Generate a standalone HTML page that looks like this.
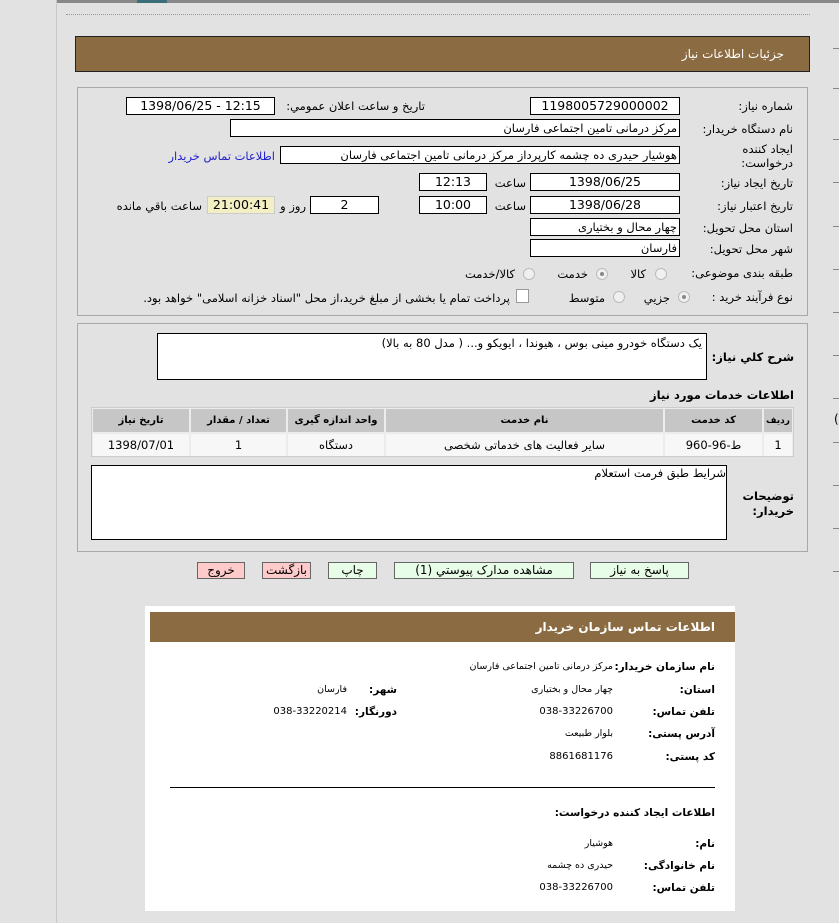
<!DOCTYPE html>
<html><head><meta charset="utf-8"><style>
*{margin:0;padding:0;box-sizing:border-box}
body{width:839px;height:923px;background:#e2e2e2;font-family:"DejaVu Sans","Noto Sans CJK SC",sans-serif;font-size:11.5px;color:#000;position:relative;overflow:hidden}
.a{position:absolute;white-space:nowrap}
.r{position:absolute;white-space:nowrap;direction:rtl;text-align:right}
.in{position:absolute;background:#fff;border:1px solid #000;height:18px;line-height:16px;text-align:center;font-size:12.5px}
.inr{position:absolute;background:#fff;border:1px solid #000;height:18px;line-height:16px;direction:rtl;text-align:right;padding-right:2px;font-size:11.5px;overflow:hidden}
.rad{position:absolute;width:12px;height:12px;border-radius:50%;border:1px solid #bbb;background:#f0f0f0}
.rad.on::after{content:"";position:absolute;left:3px;top:3px;width:4px;height:4px;border-radius:50%;background:#888}
.btn{position:absolute;height:17px;border:1px solid #666;line-height:15px;text-align:center;font-size:12px}
.t{position:absolute;left:833px;width:6px;height:1px;background:#888}
table{border-collapse:collapse}
.b{font-weight:bold}
.cl{font-size:10.5px}
</style></head><body>
<div class="a" style="left:56px;top:0;width:1px;height:923px;background:#c8c8c8"></div>
<div class="a" style="left:57px;top:0;width:782px;height:3px;background:#888"></div>
<div class="a" style="left:137px;top:0;width:30px;height:3px;background:#3a6f7a"></div>
<div class="a" style="left:66px;top:14px;width:744px;border-top:1px dotted #999"></div>
<div class="t" style="top:48px"></div><div class="t" style="top:88px"></div><div class="t" style="top:139px"></div><div class="t" style="top:182px"></div><div class="t" style="top:226px"></div><div class="t" style="top:269px"></div><div class="t" style="top:312px"></div><div class="t" style="top:355px"></div><div class="t" style="top:398px"></div><div class="t" style="top:442px"></div><div class="t" style="top:485px"></div><div class="t" style="top:528px"></div><div class="t" style="top:571px"></div>
<div class="a" style="left:834px;top:412px;font-size:12px">(</div>

<div class="a" style="left:75px;top:36px;width:735px;height:36px;background:#8b6c42;border:1px solid #222"></div>
<div class="r" style="right:55px;top:47px;color:#fff;font-size:12px">جزئیات اطلاعات نیاز</div>

<div class="a" style="left:77px;top:87px;width:731px;height:229px;border:1px solid #a8a8a8"></div>
<div class="r" style="right:46px;top:99px">شماره نیاز:</div>
<div class="in" style="left:530px;top:97px;width:150px">1198005729000002</div>
<div class="r" style="right:414px;top:99px">تاریخ و ساعت اعلان عمومي:</div>
<div class="in" style="left:126px;top:97px;width:149px">1398/06/25 - 12:15</div>
<div class="r" style="right:46px;top:122px">نام دستگاه خریدار:</div>
<div class="inr" style="left:230px;top:119px;width:450px">مرکز درمانی تامین اجتماعی فارسان</div>
<div class="r" style="right:46px;top:142px;line-height:14px">ایجاد کننده<br>درخواست:</div>
<div class="inr" style="left:280px;top:146px;width:400px">هوشیار حیدری ده چشمه کارپرداز مرکز درمانی تامین اجتماعی فارسان</div>
<div class="r" style="right:564px;top:149px;color:#2222cc">اطلاعات تماس خریدار</div>
<div class="r" style="right:46px;top:176px">تاریخ ایجاد نیاز:</div>
<div class="in" style="left:530px;top:173px;width:150px">1398/06/25</div>
<div class="r" style="right:313px;top:176px">ساعت</div>
<div class="in" style="left:419px;top:173px;width:68px">12:13</div>
<div class="r" style="right:46px;top:199px">تاریخ اعتبار نیاز:</div>
<div class="in" style="left:530px;top:196px;width:150px">1398/06/28</div>
<div class="r" style="right:313px;top:199px">ساعت</div>
<div class="in" style="left:419px;top:196px;width:68px">10:00</div>
<div class="in" style="left:310px;top:196px;width:69px">2</div>
<div class="r" style="right:533px;top:199px">روز و</div>
<div class="in" style="left:207px;top:196px;width:68px;background:#f3efc4;border-color:#ccc">21:00:41</div>
<div class="r" style="right:637px;top:199px">ساعت باقي مانده</div>
<div class="r" style="right:46px;top:221px">استان محل تحویل:</div>
<div class="inr" style="left:530px;top:218px;width:150px">چهار محال و بختیاری</div>
<div class="r" style="right:46px;top:242px">شهر محل تحویل:</div>
<div class="inr" style="left:530px;top:239px;width:150px">فارسان</div>
<div class="r" style="right:46px;top:266px">طبقه بندی موضوعی:</div>
<div class="rad" style="left:655px;top:268px"></div><div class="r" style="right:193px;top:267px">کالا</div>
<div class="rad on" style="left:596px;top:268px"></div><div class="r" style="right:251px;top:267px">خدمت</div>
<div class="rad" style="left:523px;top:268px"></div><div class="r" style="right:324px;top:267px">کالا/خدمت</div>
<div class="r" style="right:46px;top:290px">نوع فرآیند خرید :</div>
<div class="rad on" style="left:678px;top:291px"></div><div class="r" style="right:169px;top:291px">جزیي</div>
<div class="rad" style="left:613px;top:291px"></div><div class="r" style="right:234px;top:291px">متوسط</div>
<div class="a" style="left:516px;top:289px;width:13px;height:14px;border:1px solid #999;background:#fff"></div>
<div class="r" style="right:329px;top:291px">پرداخت تمام یا بخشی از مبلغ خرید،از محل "اسناد خزانه اسلامی" خواهد بود.</div>

<div class="a" style="left:77px;top:323px;width:731px;height:229px;border:1px solid #a8a8a8"></div>
<div class="r b" style="right:45px;top:350px">شرح کلي نیاز:</div>
<div class="a" style="left:157px;top:333px;width:550px;height:47px;background:#fff;border:1px solid #000"></div>
<div class="r" style="right:137px;top:336px">یک دستگاه خودرو مینی بوس ، هیوندا ، ایویکو و... ( مدل 80 به بالا)</div>
<div class="r b" style="right:45px;top:388px">اطلاعات خدمات مورد نیاز</div>
<div class="a" style="left:91px;top:407px;width:703px;height:50px;background:#ececec;border:1px solid #ccc"></div>
<table class="a" style="left:93px;top:409px;width:699px;direction:rtl;font-size:10px;text-align:center;table-layout:fixed">
<tr style="height:24px;background:#c6c6c6;font-weight:bold"><td style="width:29px;border-left:2px solid #ececec;font-size:9px">ردیف</td><td style="width:99px;border-left:2px solid #ececec">کد خدمت</td><td style="width:279px;border-left:2px solid #ececec">نام خدمت</td><td style="width:98px;border-left:2px solid #ececec">واحد اندازه گیری</td><td style="width:97px;border-left:2px solid #ececec">تعداد / مقدار</td><td>تاریخ نیاز</td></tr>
<tr style="height:23px;background:#f7f7f7;font-size:11.5px"><td style="border-left:2px solid #ececec;border-top:2px solid #ececec">1</td><td style="border-left:2px solid #ececec;border-top:2px solid #ececec">ط-96-960</td><td style="border-left:2px solid #ececec;border-top:2px solid #ececec">سایر فعالیت های خدماتی شخصی</td><td style="border-left:2px solid #ececec;border-top:2px solid #ececec">دستگاه</td><td style="border-left:2px solid #ececec;border-top:2px solid #ececec">1</td><td style="border-top:2px solid #ececec">1398/07/01</td></tr>
</table>
<div class="a" style="left:91px;top:465px;width:636px;height:75px;background:#fff;border:1px solid #000"></div>
<div class="r" style="right:113px;top:466px">شرایط طبق فرمت استعلام</div>
<div class="r b" style="right:45px;top:489px;line-height:15px">توضیحات<br>خریدار:</div>

<div class="btn" style="left:197px;top:562px;width:48px;background:#ffcaca">خروج</div>
<div class="btn" style="left:262px;top:562px;width:49px;background:#ffcaca">بازگشت</div>
<div class="btn" style="left:328px;top:562px;width:49px;background:#e8fde8">چاپ</div>
<div class="btn" style="left:394px;top:562px;width:180px;background:#e8fde8">مشاهده مدارک پیوستي (1)</div>
<div class="btn" style="left:590px;top:562px;width:99px;background:#e8fde8">پاسخ به نیاز</div>

<div class="a" style="left:145px;top:606px;width:590px;height:305px;background:#fff"></div>
<div class="a" style="left:150px;top:612px;width:585px;height:30px;background:#8b6c42"></div>
<div class="r b" style="right:124px;top:620px;color:#fff;font-size:12px">اطلاعات تماس سازمان خریدار</div>
<div>
<div class="r b cl" style="right:124px;top:661px">نام سازمان خریدار:</div>
<div class="r" style="right:226px;top:661px;font-size:9.5px">مرکز درمانی تامین اجتماعی فارسان</div>
<div class="r b cl" style="right:124px;top:684px">استان:</div>
<div class="r" style="right:226px;top:684px;font-size:9.5px">چهار محال و بختیاری</div>
<div class="r b cl" style="right:442px;top:684px">شهر:</div>
<div class="r" style="right:492px;top:684px;font-size:9.5px">فارسان</div>
<div class="r b cl" style="right:124px;top:706px">تلفن تماس:</div>
<div class="r" style="right:226px;top:706px;font-size:10px">038-33226700</div>
<div class="r b cl" style="right:442px;top:706px">دورنگار:</div>
<div class="r" style="right:492px;top:706px;font-size:10px">038-33220214</div>
<div class="r b cl" style="right:124px;top:728px">آدرس پستی:</div>
<div class="r" style="right:226px;top:728px;font-size:9.5px">بلوار طبیعت</div>
<div class="r b cl" style="right:124px;top:751px">کد پستی:</div>
<div class="r" style="right:226px;top:751px;font-size:10px">8861681176</div>
<div class="a" style="left:170px;top:787px;width:545px;height:1px;background:#000"></div>
<div class="r b cl" style="right:124px;top:807px">اطلاعات ایجاد کننده درخواست:</div>
<div class="r b cl" style="right:124px;top:838px">نام:</div>
<div class="r" style="right:226px;top:838px;font-size:9.5px">هوشیار</div>
<div class="r b cl" style="right:124px;top:860px">نام خانوادگی:</div>
<div class="r" style="right:226px;top:860px;font-size:9.5px">حیدری ده چشمه</div>
<div class="r b cl" style="right:124px;top:882px">تلفن تماس:</div>
<div class="r" style="right:226px;top:882px;font-size:10px">038-33226700</div>
</div>
</body></html>
